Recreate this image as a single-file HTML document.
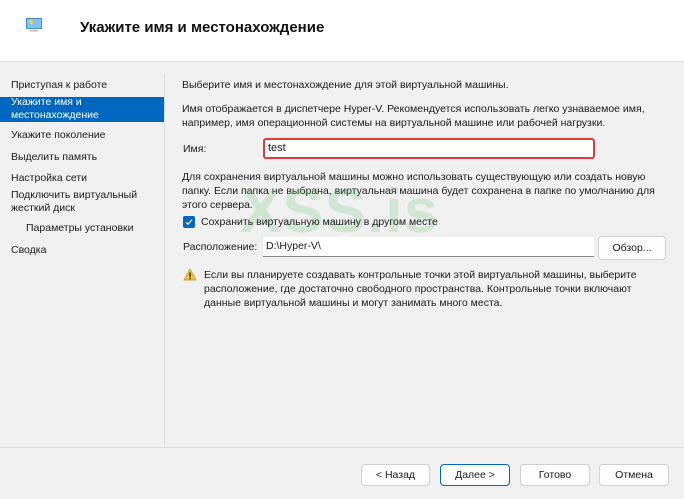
<!DOCTYPE html><html><head><meta charset="utf-8"><style>
*{margin:0;padding:0;box-sizing:border-box}
body{width:684px;height:499px;background:#f0f0f0;font-family:"Liberation Sans","DejaVu Sans",sans-serif;font-size:10.5px;color:#1a1a1a;position:relative;overflow:hidden}
.a{position:absolute;white-space:nowrap}
.hdr{position:absolute;left:0;top:0;width:684px;height:62px;background:#fff;border-bottom:1px solid #dcdcdc}
.btn{position:absolute;height:22px;background:#fdfdfd;border:1px solid #d0d0d0;border-radius:4px;text-align:center;line-height:20px;font-size:10.5px}
p{position:absolute;line-height:14px}
</style></head><body>
<div class="hdr"></div>
<svg class="a" style="left:26px;top:18px" width="16" height="14"><rect x="0.5" y="0.5" width="15" height="10" fill="#7fc3f0" stroke="#4a90c8"/><circle cx="5" cy="4" r="2" fill="#f5d040"/><rect x="4" y="12" width="8" height="1.5" fill="#bbb"/></svg>
<div class="a" style="left:80px;top:19px;font-size:15px;font-weight:bold;color:#111">Укажите имя и местонахождение</div>
<div class="a" style="left:164px;top:74px;width:1px;height:370px;background:#dcdcdc"></div>
<div class="a" style="left:11px;top:79px">Приступая к работе</div>
<div class="a" style="left:0;top:97px;width:164px;height:25px;background:#0067c0"></div>
<p style="left:11px;top:96px;color:#fff;font-size:10.5px;line-height:13px">Укажите имя и<br>местонахождение</p>
<div class="a" style="left:11px;top:129px">Укажите поколение</div>
<div class="a" style="left:11px;top:151px">Выделить память</div>
<div class="a" style="left:11px;top:172px">Настройка сети</div>
<p style="left:11px;top:189px;line-height:13px">Подключить виртуальный<br>жесткий диск</p>
<div class="a" style="left:26px;top:222px">Параметры установки</div>
<div class="a" style="left:11px;top:244px">Сводка</div>
<div class="a" style="left:182px;top:79px">Выберите имя и местонахождение для этой виртуальной машины.</div>
<p style="left:182px;top:102px">Имя отображается в диспетчере Hyper-V. Рекомендуется использовать легко узнаваемое имя,<br>например, имя операционной системы на виртуальной машине или рабочей нагрузки.</p>
<div class="a" style="left:183px;top:143px">Имя:</div>
<div class="a" style="left:263px;top:138px;width:332px;height:21px;background:#fff;border:2px solid #e5383f;border-radius:3px;padding:2px 3px;font-size:11px">test</div>
<p style="left:182px;top:170px">Для сохранения виртуальной машины можно использовать существующую или создать новую<br>папку. Если папка не выбрана, виртуальная машина будет сохранена в папке по умолчанию для<br>этого сервера.</p>
<div class="a" style="left:240px;top:176px;font-size:62px;font-weight:bold;color:rgba(80,190,90,0.2);letter-spacing:1px">XSS.is</div>
<div class="a" style="left:183px;top:216px;width:12px;height:12px;background:#0067c0;border-radius:2px"><svg width="12" height="12"><path d="M3 6.2l2 2 4-4.4" stroke="#fff" stroke-width="1.3" fill="none"/></svg></div>
<div class="a" style="left:201px;top:216px">Сохранить виртуальную машину в другом месте</div>
<div class="a" style="left:183px;top:241px">Расположение:</div>
<div class="a" style="left:263px;top:237px;width:331px;height:20px;background:#fff;border-bottom:1px solid #888;padding:3px 3px">D:\Hyper-V\</div>
<div class="btn" style="left:598px;top:236px;width:68px;height:24px;line-height:22px">Обзор...</div>
<svg class="a" style="left:183px;top:268px" width="14" height="13"><path d="M7 1L13 12H1Z" fill="#f4c430" stroke="#c89000" stroke-width="0.7"/><rect x="6.3" y="4.5" width="1.4" height="4.5" fill="#222"/><rect x="6.3" y="9.8" width="1.4" height="1.4" fill="#222"/></svg>
<p style="left:204px;top:268px">Если вы планируете создавать контрольные точки этой виртуальной машины, выберите<br>расположение, где достаточно свободного пространства. Контрольные точки включают<br>данные виртуальной машины и могут занимать много места.</p>
<div class="a" style="left:0;top:447px;width:684px;height:1px;background:#dcdcdc"></div>
<div class="btn" style="left:361px;top:464px;width:69px">&lt; Назад</div>
<div class="btn" style="left:440px;top:464px;width:70px;border-color:#0067c0">Далее &gt;</div>
<div class="btn" style="left:520px;top:464px;width:70px">Готово</div>
<div class="btn" style="left:599px;top:464px;width:70px">Отмена</div>
</body></html>
